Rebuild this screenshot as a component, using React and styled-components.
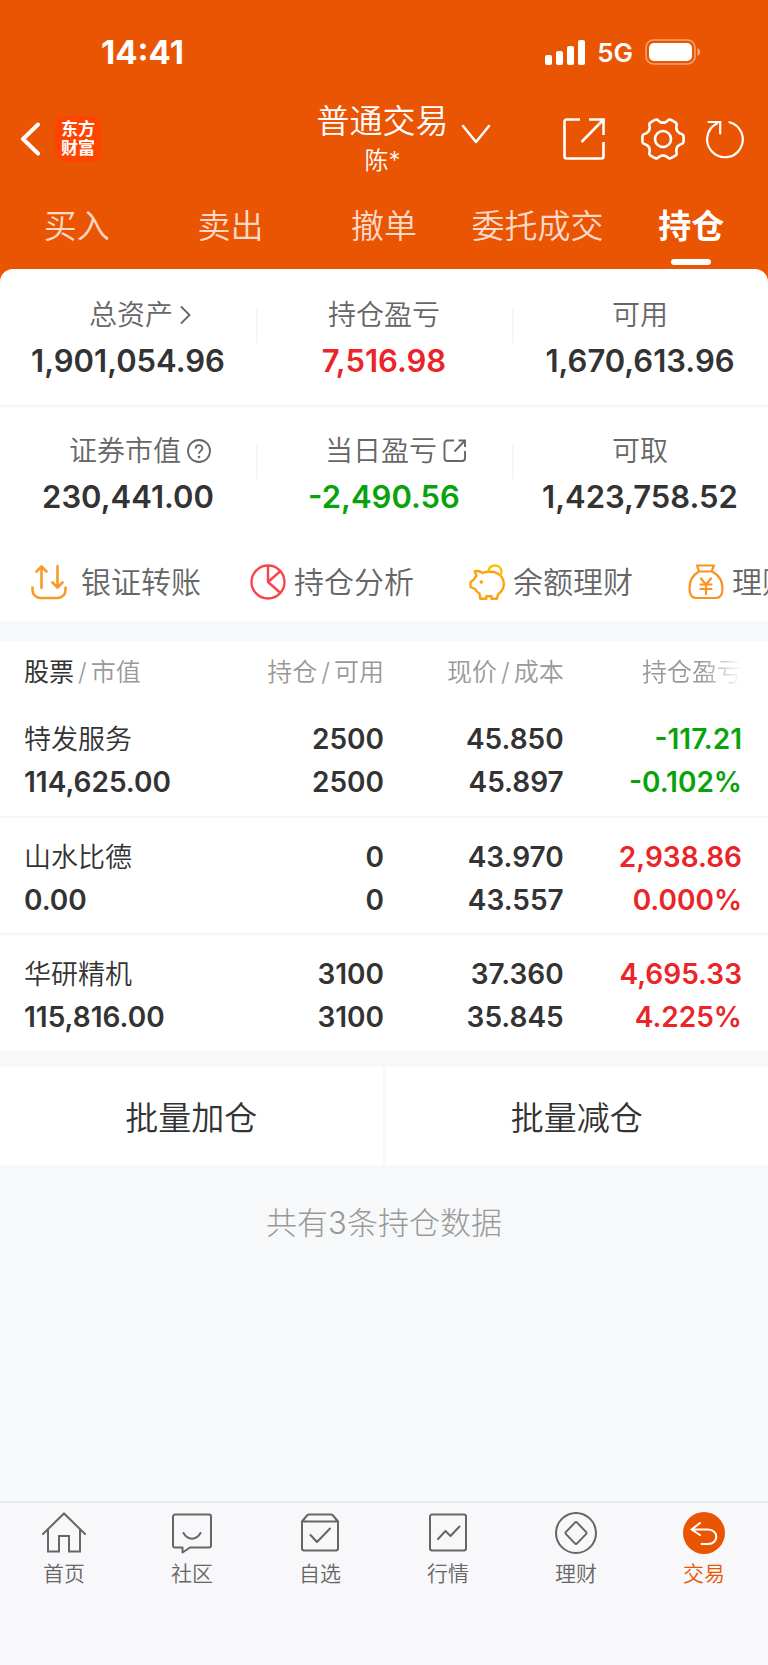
import React from "react";
import styled, { createGlobalStyle, css } from "styled-components";

const color = {
  brand: "#ea5504",
  ink: "#333333",
  label: "#666666",
  muted: "#999999",
  up: "#ea2427",
  down: "#08a30a",
  line: "#f5f6f7",
  page: "#f6f8fa",
};

const GlobalStyle = createGlobalStyle`
  *, *::before, *::after { box-sizing: border-box; }
  body {
    margin: 0;
    background: ${color.page};
    color: ${color.ink};
    font-family: Inter, "Noto Sans CJK SC", sans-serif;
    font-weight: 350;
  }
  button {
    border: 0;
    padding: 0;
    background: none;
    color: inherit;
    font: inherit;
    cursor: pointer;
  }
  a { color: inherit; text-decoration: none; }
  svg { display: block; flex: none; }
`;

const Page = styled.div`
  display: flex;
  flex-direction: column;
  min-height: 100vh;
  overflow: hidden;
`;

const Header = styled.header`
  background: ${color.brand};
  color: #fff;
`;

const StatusBar = styled.div`
  display: flex;
  align-items: center;
  justify-content: space-between;
  height: 100px;
  padding: 4px 67px 0 101px;
`;

const Clock = styled.time`
  font-size: 33px;
  font-weight: 700;
`;

const Signals = styled.div`
  display: flex;
  align-items: center;
  gap: 12px;
  font-size: 26px;
  font-weight: 600;
`;

const TitleBar = styled.div`
  display: grid;
  grid-template-columns: 1fr auto 1fr;
  align-items: center;
  height: 78px;
  padding: 0 23px 0 20px;
`;

const TitleSide = styled.div`
  display: flex;
  align-items: center;
  gap: 14px;
`;

const Actions = styled(TitleSide)`
  justify-content: flex-end;
  gap: 20px;
`;

const ShareButton = styled.button`
  && { margin-right: 16px; }
`;

const Logo = styled.span`
  display: grid;
  place-content: center;
  width: 46px;
  height: 46px;
  border-radius: 9px;
  background: #ff4400;
  font-size: 17px;
  font-weight: 700;
  line-height: 19px;
`;

const Account = styled.button`
  && {
    display: flex;
    align-items: center;
    gap: 12px;
    padding-left: 42px;
  }
  svg { margin-bottom: 10px; }
`;

const AccountText = styled.span`
  display: flex;
  flex-direction: column;
  align-items: center;
  gap: 2px;
`;

const AccountTitle = styled.span`
  font-size: 33px;
  line-height: 42px;
`;

const AccountUser = styled.span`
  font-size: 24px;
  line-height: 34px;
`;

const Tabs = styled.nav`
  display: grid;
  grid-template-columns: repeat(5, 1fr);
  height: 91px;
`;

const Tab = styled.a`
  display: flex;
  flex-direction: column;
  align-items: center;
  justify-content: flex-end;
  gap: 8px;
  padding-bottom: 4px;
  font-size: 33px;
  line-height: 50px;
  white-space: nowrap;
  color: ${(p) => (p.$active ? "#fff" : "#fcd9c6")};
  font-weight: ${(p) => (p.$active ? 700 : 350)};
  &::after {
    content: "";
    width: 40px;
    height: 6px;
    border-radius: 3px;
    background: ${(p) => (p.$active ? "#fff" : "transparent")};
  }
`;

const SheetBacking = styled.section`
  background: ${color.brand};
`;

const Sheet = styled.div`
  border-radius: 13px 13px 0 0;
  background: #fff;
`;

const Summary = styled.dl`
  display: grid;
  grid-template-columns: repeat(3, 1fr);
  margin: 0;
  padding-top: ${(p) => (p.$first ? 26 : 24)}px;
  height: ${(p) => (p.$first ? 138 : 136)}px;
  border-bottom: ${(p) => (p.$first ? `2px solid ${color.line}` : "0")};
`;

const Metric = styled.div`
  display: flex;
  flex-direction: column;
  align-items: center;
  & + & {
    background: linear-gradient(${color.line}, ${color.line}) left 14px / 2px 34px no-repeat;
  }
`;

const MetricLabel = styled.dt`
  display: flex;
  align-items: center;
  gap: 6px;
  height: 40px;
  padding-left: ${(p) => (p.$icon ? 24 : 0)}px;
  font-size: 28px;
  line-height: 40px;
  color: ${color.label};
`;

const MetricValue = styled.dd`
  margin: 6px 0 0;
  font-size: 31px;
  line-height: 40px;
  font-weight: 600;
  color: ${(p) => color[p.$tone] || color.ink};
`;

const Shortcuts = styled.nav`
  display: flex;
  height: 78px;
  padding-left: 31px;
  overflow: hidden;
`;

const Shortcut = styled.a`
  display: flex;
  flex: 0 0 219px;
  align-items: center;
  gap: ${(p) => (p.$wide ? 14 : 8)}px;
  color: ${color.label};
  font-size: 30px;
  line-height: 40px;
`;

const Holdings = styled.section`
  margin-top: 20px;
  background: #fff;
`;

const Table = styled.table`
  width: 100%;
  table-layout: fixed;
  border-collapse: collapse;
`;

const cell = css`
  padding: 0;
  text-align: right;
  font-weight: inherit;
  white-space: nowrap;
  &:first-child { padding-left: 24px; text-align: left; }
  &:last-child { padding-right: 26px; }
`;

const Col = styled.col`
  width: ${(p) => p.$width};
`;

const HeadCell = styled.th`
  ${cell}
  padding-top: 4px;
  font-size: 25px;
  line-height: 55px;
  font-weight: 350;
  color: ${color.muted};
`;

const Fade = styled.span`
  mask-image: linear-gradient(to right, #000 60%, transparent);
`;

const Strong = styled.span`
  font-weight: 400;
  color: ${color.ink};
`;

const Slash = styled.span`
  padding: 0 4px;
`;

const Row = styled.tr`
  & + & { border-top: 2px solid ${color.line}; }
`;

const Cell = styled.td`
  ${cell}
  height: 117px;
  padding-top: 6px;
  color: ${(p) => color[p.$tone] || color.ink};
`;

const Line = styled.span`
  display: block;
  font-size: ${(p) => (p.$name ? 27 : 28)}px;
  line-height: 43px;
  height: 43px;
  font-weight: ${(p) => (p.$name ? 350 : 600)};
`;

const BatchActions = styled.div`
  display: grid;
  grid-template-columns: 1fr 1fr;
  gap: 3px;
  margin-top: 16px;
`;

const BatchButton = styled.button`
  && {
    height: 98px;
    background: #fff;
    font-size: 33px;
  }
`;

const Count = styled.p`
  margin: 34px 0 48px;
  text-align: center;
  font-size: 31px;
  font-weight: 300;
  line-height: 48px;
  color: ${color.muted};
`;

const BottomNav = styled.nav`
  display: grid;
  grid-template-columns: repeat(6, 1fr);
  height: 164px;
  margin-top: auto;
  padding-top: 9px;
  border-top: 2px solid #e6ebec;
  background: #f8f8fb;
`;

const NavItem = styled.a`
  display: flex;
  flex-direction: column;
  align-items: center;
  gap: 2px;
  font-size: 21px;
  line-height: 32px;
  color: ${(p) => (p.$active ? color.brand : color.label)};
`;

const Icon = ({ w, h, sw = 2, stroke = "currentColor", children, ...rest }) => (
  <svg width={w} height={h} viewBox={`0 0 ${w} ${h}`} fill="none" stroke={stroke} strokeWidth={sw} {...rest}>
    {children}
  </svg>
);

/* Six-toothed cog outline around (22, 22). */
const gearPath = (() => {
  const at = (deg, r) => {
    const a = (deg * Math.PI) / 180;
    return `${(22 + r * Math.cos(a)).toFixed(2)} ${(22 + r * Math.sin(a)).toFixed(2)}`;
  };
  let d = `M${at(-9, 20.7)}`;
  for (let k = 0; k < 6; k += 1) {
    const a = k * 60;
    d += `Q${at(a, 20.8)} ${at(a + 9, 20.7)}Q${at(a + 13, 20.7)} ${at(a + 15, 19.2)}`;
    d += `Q${at(a + 30, 14)} ${at(a + 45, 19.2)}Q${at(a + 47, 20.7)} ${at(a + 51, 20.7)}`;
  }
  return `${d}Z`;
})();

const SignalIcon = () => (
  <Icon w={40} h={25} stroke="none" fill="#fff">
    <rect x="0" y="15" width="7" height="10" rx="2" />
    <rect x="11" y="11" width="7" height="14" rx="2" />
    <rect x="22" y="6" width="7" height="19" rx="2" />
    <rect x="33" y="0" width="7" height="25" rx="2" />
  </Icon>
);

const BatteryIcon = () => (
  <Icon w={56} h={26}>
    <rect x="1" y="1" width="49" height="24" rx="7.5" stroke="#fff" strokeOpacity=".45" strokeWidth="1.6" />
    <rect x="4" y="4" width="43" height="18" rx="5" fill="#fff" stroke="none" />
    <path d="M52.500 9c3.400 1.200 3.400 6.800 0 8z" fill="#fff" fillOpacity=".5" stroke="none" />
  </Icon>
);

const BackIcon = () => (
  <Icon w={21} h={34} sw={4} strokeLinecap="round" strokeLinejoin="round">
    <path d="M18 2.500 3 17l15 14.500" />
  </Icon>
);

const ChevronDownIcon = () => (
  <Icon w={30} h={20} sw={2.5} strokeLinecap="round" strokeLinejoin="round">
    <path d="M2 2l13 16L28 2" />
  </Icon>
);

const ShareIcon = () => (
  <Icon w={42} h={42} sw={2.6}>
    <path d="M17 1.500H3.500a2 2 0 0 0-2 2v35a2 2 0 0 0 2 2h35a2 2 0 0 0 2-2V24M26 1.500h14.500V17M40 2 18.500 24" />
  </Icon>
);

const GearIcon = () => (
  <Icon w={44} h={44} sw={2.6} strokeLinejoin="round">
    <path d={gearPath} />
    <circle cx="22" cy="22" r="8" />
  </Icon>
);

const RefreshIcon = () => (
  <Icon w={40} h={40} sw={2.2} strokeLinecap="round">
    <path d="M24.500 3.200A17.800 17.800 0 1 1 12 4.500M3.500 3h11.700v11.500" />
  </Icon>
);

const ChevronRightIcon = () => (
  <Icon w={12} h={20} sw={1.8}>
    <path d="M2 1.500 10.500 10 2 18.500" />
  </Icon>
);

const HelpIcon = () => (
  <Icon w={24} h={24} sw={1.8}>
    <circle cx="12" cy="12" r="11" />
    <path d="M8.600 9.500C8.600 5 15.400 5 15.400 9.200c0 2.800-3.400 2.800-3.400 5.600" />
    <circle cx="12" cy="18" r="1.300" fill="currentColor" stroke="none" />
  </Icon>
);

const OpenIcon = () => (
  <Icon w={24} h={24} sw={1.9}>
    <path d="M11 1.500H4.500a3 3 0 0 0-3 3v14.500a3 3 0 0 0 3 3h14.500a3 3 0 0 0 3-3V12M15.500 1.500H22V8M22 1.500 11.500 12.500" />
  </Icon>
);

const TransferIcon = () => (
  <Icon w={36} h={36} stroke="#f79a28" sw={2.6} strokeLinecap="round" strokeLinejoin="round">
    <path d="M1.500 23.500v2.500a8 8 0 0 0 8 8h17a8 8 0 0 0 8-8v-2.500M10.500 24V2.500M5.500 7.500l5-5 5 5M26.500 2v21M21.500 18.500l5 5 5-5" />
  </Icon>
);

const PieIcon = () => (
  <Icon w={36} h={36} stroke="#fb444a" sw={2.4} strokeLinejoin="round">
    <circle cx="18" cy="18" r="16.500" />
    <path d="M18 1.500V18l12.500 11M18 18 30.500 7" />
  </Icon>
);

const PiggyIcon = () => (
  <Icon w={36} h={36} stroke="#fba20c" sw={2.4} strokeLinejoin="round">
    <path d="M19 7.700c-2.700.1-4 .5-5.200 1.300C11.500 7.300 8.700 6.600 5.800 7.200l1.600 4.600c-1.600 1.500-2 2.700-2.700 4L1.500 18v5l4.300 1.800c1.200 2.200 3 3.700 4.700 4.700l.8 5.200h6v-2.500h5.200v2.500h5.400l1.300-4.500c3.800-2.800 5.600-6 5.600-10 0-7.200-5.600-12.500-12.800-12.500z" />
    <path d="M19.200 7.500C20 3.500 22.500 1.500 26 1.500c4 0 6.500 2.800 6.500 6.200 0 1.900-.6 3.200-1.500 4.300" stroke="#ffbd0a" />
    <circle cx="12.300" cy="18" r="1.800" fill="#fba20c" stroke="none" />
  </Icon>
);

const MoneyBagIcon = () => (
  <Icon w={36} h={36} stroke="#fb9220" sw={2.2} strokeLinejoin="round" strokeLinecap="round">
    <path d="M11 7.500 9 1.500h17l-2.500 6zM11 7.500C4.500 11 1.500 17.500 1.500 24.500c0 6 2.500 9.500 6.500 9.500h20c4 0 6.500-3.500 6.500-9.500C34.500 17.500 31 11 24 7.500" />
    <path d="M13 14.500l5 6 5-6M18 20.500V30M12.500 20.500h11M12.500 25h11" />
  </Icon>
);

const tabs = ["买入", "卖出", "撤单", "委托成交", "持仓"];

const summaryRows = [
  [
    { label: "总资产", icon: <ChevronRightIcon />, value: "1,901,054.96" },
    { label: "持仓盈亏", value: "7,516.98", tone: "up" },
    { label: "可用", value: "1,670,613.96" },
  ],
  [
    { label: "证券市值", icon: <HelpIcon />, value: "230,441.00" },
    { label: "当日盈亏", icon: <OpenIcon />, value: "-2,490.56", tone: "down" },
    { label: "可取", value: "1,423,758.52" },
  ],
];

const shortcuts = [
  { label: "银证转账", icon: <TransferIcon />, wide: true },
  { label: "持仓分析", icon: <PieIcon /> },
  { label: "余额理财", icon: <PiggyIcon /> },
  { label: "理财", icon: <MoneyBagIcon /> },
];

const holdings = [
  { name: "特发服务", value: "114,625.00", held: "2500", free: "2500", price: "45.850", cost: "45.897", gain: "-117.21", rate: "-0.102%", tone: "down" },
  { name: "山水比德", value: "0.00", held: "0", free: "0", price: "43.970", cost: "43.557", gain: "2,938.86", rate: "0.000%", tone: "up" },
  { name: "华研精机", value: "115,816.00", held: "3100", free: "3100", price: "37.360", cost: "35.845", gain: "4,695.33", rate: "4.225%", tone: "up" },
];

const navItems = [
  {
    label: "首页",
    icon: <path d="M1 22 22 1.500 43 22M6 18v21.500h11V24h10v15.500h11V18" strokeLinejoin="miter" />,
  },
  {
    label: "社区",
    icon: <path d="M5 2.500h34a2 2 0 0 1 2 2v29a2 2 0 0 1-2 2H20l-7.500 5v-5H5a2 2 0 0 1-2-2V4.500a2 2 0 0 1 2-2zM13.500 21c4 7.500 13 7.500 17 0" />,
  },
  {
    label: "自选",
    icon: <path d="M4 9.500h36v27a2 2 0 0 1-2 2H6a2 2 0 0 1-2-2v-27L9 3.500q1-1 2-1h22q1 0 2 1l5 6M12.500 23l6.500 7 13-13.500" />,
  },
  {
    label: "行情",
    icon: <path d="M6 2.500h32a2 2 0 0 1 2 2v32a2 2 0 0 1-2 2H6a2 2 0 0 1-2-2v-32a2 2 0 0 1 2-2zM12 27l7.500-8 5 5 9-9.500" />,
  },
  {
    label: "理财",
    icon: (
      <>
        <circle cx="22" cy="21" r="20" />
        <path d="M20.900 10.600 12 19.900q-1 1.100 0 2.200l8.900 9.300q1.100 1 2.200 0l8.900-9.300q1-1.100 0-2.200l-8.900-9.300q-1.100-1-2.200 0z" />
      </>
    ),
  },
  {
    label: "交易",
    active: true,
    icon: (
      <>
        <circle cx="22" cy="21" r="21" fill={color.brand} stroke="none" />
        <path d="M18 11 9.500 17.500 18 23M9.500 17.500H26c11 0 11 14.500 0 14.500h-6.500" stroke="#fff" />
      </>
    ),
  },
];

export default function App() {
  return (
    <Page>
      <GlobalStyle />
      <Header>
        <StatusBar>
          <Clock>14:41</Clock>
          <Signals>
            <SignalIcon />
            <span>5G</span>
            <BatteryIcon />
          </Signals>
        </StatusBar>
        <TitleBar>
          <TitleSide>
            <button aria-label="返回"><BackIcon /></button>
            <Logo><span>东方</span><span>财富</span></Logo>
          </TitleSide>
          <Account>
            <AccountText>
              <AccountTitle>普通交易</AccountTitle>
              <AccountUser>陈*</AccountUser>
            </AccountText>
            <ChevronDownIcon />
          </Account>
          <Actions>
            <ShareButton aria-label="分享"><ShareIcon /></ShareButton>
            <button aria-label="设置"><GearIcon /></button>
            <button aria-label="刷新"><RefreshIcon /></button>
          </Actions>
        </TitleBar>
        <Tabs>
          {tabs.map((t) => (
            <Tab key={t} href="#" $active={t === "持仓"}>{t}</Tab>
          ))}
        </Tabs>
      </Header>

      <SheetBacking>
        <Sheet>
          {summaryRows.map((row, i) => (
            <Summary key={row[0].label} $first={i === 0}>
              {row.map((m) => (
                <Metric key={m.label}>
                  <MetricLabel $icon={!!m.icon}>{m.label}{m.icon}</MetricLabel>
                  <MetricValue $tone={m.tone}>{m.value}</MetricValue>
                </Metric>
              ))}
            </Summary>
          ))}
          <Shortcuts>
            {shortcuts.map((s) => (
              <Shortcut key={s.label} href="#" $wide={s.wide}>{s.icon}{s.label}</Shortcut>
            ))}
          </Shortcuts>
        </Sheet>
      </SheetBacking>

      <Holdings>
        <Table>
          <colgroup>
            <Col $width="26%" />
            <Col $width="24%" />
            <Col $width="23.4%" />
            <Col $width="26.6%" />
          </colgroup>
          <thead>
            <tr>
              <HeadCell><Strong>股票</Strong><Slash>/</Slash>市值</HeadCell>
              <HeadCell>持仓<Slash>/</Slash>可用</HeadCell>
              <HeadCell>现价<Slash>/</Slash>成本</HeadCell>
              <HeadCell><Fade>持仓盈亏</Fade></HeadCell>
            </tr>
          </thead>
          <tbody>
            {holdings.map((h) => (
              <Row key={h.name}>
                <Cell><Line $name>{h.name}</Line><Line>{h.value}</Line></Cell>
                <Cell><Line>{h.held}</Line><Line>{h.free}</Line></Cell>
                <Cell><Line>{h.price}</Line><Line>{h.cost}</Line></Cell>
                <Cell $tone={h.tone}><Line>{h.gain}</Line><Line>{h.rate}</Line></Cell>
              </Row>
            ))}
          </tbody>
        </Table>
      </Holdings>

      <BatchActions>
        <BatchButton>批量加仓</BatchButton>
        <BatchButton>批量减仓</BatchButton>
      </BatchActions>
      <Count>共有3条持仓数据</Count>

      <BottomNav>
        {navItems.map((n) => (
          <NavItem key={n.label} href="#" $active={n.active}>
            <Icon w={44} h={44} strokeLinecap="round" strokeLinejoin="round">{n.icon}</Icon>
            {n.label}
          </NavItem>
        ))}
      </BottomNav>
    </Page>
  );
}
